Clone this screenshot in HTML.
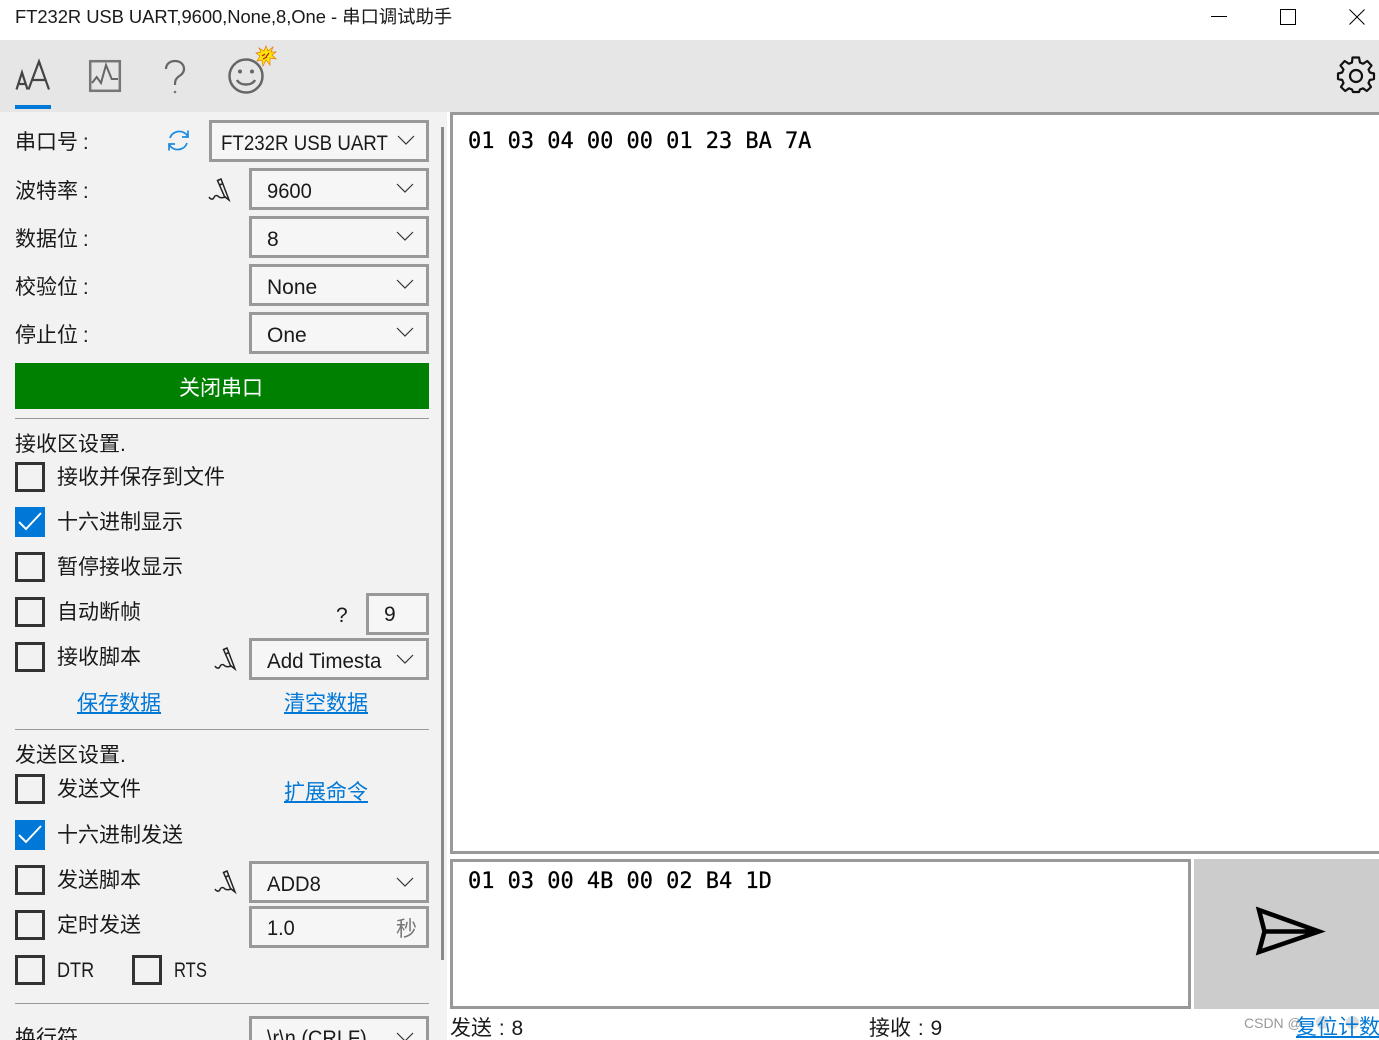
<!DOCTYPE html>
<html lang="zh"><head><meta charset="utf-8"><title>串口调试助手</title>
<style>
html,body{margin:0;padding:0;width:1379px;height:1040px;overflow:hidden;background:#fff}
body{position:relative;font-family:"Liberation Sans","Noto Sans CJK SC",sans-serif;color:#1a1a1a}
.a{position:absolute}
.t{position:absolute;white-space:nowrap;font-size:21px;line-height:28px;height:28px;margin-top:1px}
.l{position:absolute;white-space:nowrap;font-size:21px;line-height:28px;color:#0078d7;text-decoration:underline}
.box{position:absolute;box-sizing:border-box;border:3px solid #999;background:#f6f6f6}
.cb{position:absolute;box-sizing:border-box;width:30px;height:30px;border:3px solid #333;left:15px}
.cb.on{background:#0078d7;border-color:#0078d7}
.hr{position:absolute;left:15px;width:414px;height:1px;background:#999}
.m{position:absolute;white-space:pre;font-family:"DejaVu Sans Mono",monospace;font-size:21.95px;line-height:28px;color:#000;-webkit-text-stroke:.3px #000}
.sx{transform-origin:0 50%}
svg{position:absolute;overflow:visible}
</style></head><body>
<div class="t" style="left:15px;top:2px;font-size:18.4px;letter-spacing:-.05px">FT232R USB UART,9600,None,8,One - 串口调试助手</div>
<svg style="left:1211px;top:16px" width="16" height="2"><path d="M0 .5H16" stroke="#000"/></svg>
<svg style="left:1280px;top:9px" width="16" height="16"><rect x=".5" y=".5" width="15" height="15" fill="none" stroke="#000"/></svg>
<svg style="left:1349px;top:9px" width="16" height="16"><path d="M.5 .5L15.500 15.500M15.500 .5L.5 15.500" stroke="#000" fill="none"/></svg>

<div class="a" style="left:0;top:40px;width:1379px;height:72px;background:#e6e6e6"></div>
<div class="a" style="left:0;top:112px;width:447px;height:928px;background:#f2f2f2"></div>

<svg style="left:15px;top:60px" width="36" height="30" fill="none" stroke="#444" stroke-width="2.200"><path d="M1.500 29.500L7 12.500L12.500 29.500M3.200 24H10.800M13.500 29.500L24 1.500L34 29.500M16.500 20H31"/></svg>
<div class="a" style="left:15px;top:105px;width:36px;height:4px;background:#0078d7"></div>
<svg style="left:89px;top:60px" width="32" height="32" fill="none" stroke="#777" stroke-width="2.500"><rect x="1.200" y="1.200" width="29.600" height="29.600"/><path d="M3 23L7.700 17L12 23L17 5L22.700 19L29 19" stroke="#666" stroke-width="2"/></svg>
<svg style="left:164px;top:60px" width="22" height="34" fill="none" stroke="#666" stroke-width="2.200"><path d="M2 9C2 4 6 1 11 1C16 1 20 4 20 9C20 13 17 15 14 17C12 19 11 20 11 25"/><circle cx="11" cy="32" r="1.300" fill="#777" stroke="none"/></svg>
<svg style="left:228px;top:58px" width="36" height="36" fill="none" stroke="#666" stroke-width="2.500"><circle cx="18" cy="18" r="16.500"/><circle cx="12" cy="13.500" r="2" fill="#666" stroke="none"/><circle cx="24" cy="13.500" r="2" fill="#666" stroke="none"/><path d="M9 22C12 28 24 28 27 22"/></svg>
<svg style="left:256px;top:46px" width="20" height="20"><path d="M10 0L12 5L17 1L15 6L20 6L16 9L20 13L14 12L14 19L10 14L7 20L6 14L1 15L4 10L0 7L5 6L3 2L8 5Z" fill="#ffe600" stroke="#e8750c" stroke-width=".7"/><path d="M6 10L9 8M10 11L13 7M7 13L11 11" stroke="#b02020" stroke-width="1.200"/></svg>
<svg style="left:1337px;top:56px" width="38" height="38" viewBox="0 0 38 38" fill="none" stroke="#111" stroke-width="2.200" stroke-linejoin="round"><path d="M15.500 2.500H22L23 7.500L26 8.800L30.300 6L34.500 10.500L31.500 14.500L32.800 17.500L37 18.500V24L32.800 25L31.500 28L34 32L29.800 36L26 33.300L23 34.500L22 37H16L15 34.500L12 33.300L8.200 36L4 32L6.500 28L5.200 25L1 24V18.500L5.200 17.500L6.500 14.500L3.500 10.500L7.700 6L12 8.800L15 7.500Z" transform="translate(0 -1)"/><circle cx="19" cy="20" r="6"/></svg>

<div class="t" style="left:15px;top:128px;word-spacing:-1px">串口号 :</div>
<svg style="left:167px;top:129px" width="23" height="23" fill="none" stroke="#1a8ae0" stroke-width="1.700"><path d="M3 9C5 3 13 0 19 5L21 7.500M21 1.500V8H15M20 14C18 20 10 23 4 18L2 15.500M2 21.500V15H8"/></svg>
<div class="box" style="left:209px;top:120px;width:220px;height:42px"></div>
<div class="t sx" style="left:221px;top:129px;transform:scaleX(.89)">FT232R USB UART</div>
<svg class="c" style="left:397px;top:135px" width="18" height="10" fill="none" stroke="#333" stroke-width="1.200"><path d="M1 1L9 9L17 1"/></svg>

<div class="t" style="left:15px;top:177px;word-spacing:-1px">波特率 :</div>
<svg class="pen" style="left:209px;top:178px" width="22" height="24" fill="none" stroke="#222" stroke-width="1.500"><path d="M0 19C1.500 21.500 4 22 5 19.500C6 17 8 17 10 19C12 20.500 14 19.500 16.500 19M8.500 2.500L12 1L20 22L15.500 18.500ZM10.500 7L14 5.500"/></svg>
<div class="box" style="left:249px;top:168px;width:180px;height:42px"></div>
<div class="t sx" style="left:267px;top:177px;transform:scaleX(.96)">9600</div>
<svg style="left:396px;top:183px" width="18" height="10" fill="none" stroke="#333" stroke-width="1.200"><path d="M1 1L9 9L17 1"/></svg>

<div class="t" style="left:15px;top:225px;word-spacing:-1px">数据位 :</div>
<div class="box" style="left:249px;top:216px;width:180px;height:42px"></div>
<div class="t" style="left:267px;top:225px">8</div>
<svg style="left:396px;top:231px" width="18" height="10" fill="none" stroke="#333" stroke-width="1.200"><path d="M1 1L9 9L17 1"/></svg>

<div class="t" style="left:15px;top:273px;word-spacing:-1px">校验位 :</div>
<div class="box" style="left:249px;top:264px;width:180px;height:42px"></div>
<div class="t" style="left:267px;top:273px">None</div>
<svg style="left:396px;top:279px" width="18" height="10" fill="none" stroke="#333" stroke-width="1.200"><path d="M1 1L9 9L17 1"/></svg>

<div class="t" style="left:15px;top:321px;word-spacing:-1px">停止位 :</div>
<div class="box" style="left:249px;top:312px;width:180px;height:42px"></div>
<div class="t" style="left:267px;top:321px">One</div>
<svg style="left:396px;top:327px" width="18" height="10" fill="none" stroke="#333" stroke-width="1.200"><path d="M1 1L9 9L17 1"/></svg>

<div class="a" style="left:15px;top:363px;width:414px;height:46px;background:#008000"></div>
<div class="t" style="left:179px;top:374px;color:#fff">关闭串口</div>
<div class="hr" style="top:418px"></div>

<div class="t" style="left:15px;top:430px">接收区设置.</div>
<div class="cb" style="top:462px"></div><div class="t" style="left:57px;top:463px">接收并保存到文件</div>
<div class="cb on" style="top:507px"></div><svg style="left:18px;top:511px" width="25" height="20" fill="none" stroke="#fff" stroke-width="2"><path d="M1 11L8 18L23 2"/></svg><div class="t" style="left:57px;top:508px">十六进制显示</div>
<div class="cb" style="top:552px"></div><div class="t" style="left:57px;top:553px">暂停接收显示</div>
<div class="cb" style="top:597px"></div><div class="t" style="left:57px;top:598px">自动断帧</div>
<div class="t" style="left:336px;top:601px">?</div>
<div class="box" style="left:366px;top:593px;width:63px;height:42px"></div>
<div class="t" style="left:384px;top:600px">9</div>
<div class="cb" style="top:642px"></div><div class="t" style="left:57px;top:643px">接收脚本</div>
<svg style="left:215px;top:647px" width="22" height="24" fill="none" stroke="#222" stroke-width="1.500"><path d="M0 19C1.500 21.500 4 22 5 19.500C6 17 8 17 10 19C12 20.500 14 19.500 16.500 19M8.500 2.500L12 1L20 22L15.500 18.500ZM10.500 7L14 5.500"/></svg>
<div class="box" style="left:249px;top:638px;width:180px;height:42px"></div>
<div class="t sx" style="left:267px;top:647px;width:117px;overflow:hidden;transform:scaleX(.98)">Add Timestamp</div>
<svg style="left:396px;top:654px" width="18" height="10" fill="none" stroke="#333" stroke-width="1.200"><path d="M1 1L9 9L17 1"/></svg>
<div class="l" style="left:77px;top:690px">保存数据</div>
<div class="l" style="left:284px;top:690px">清空数据</div>
<div class="hr" style="top:729px"></div>

<div class="t" style="left:15px;top:741px">发送区设置.</div>
<div class="cb" style="top:774px"></div><div class="t" style="left:57px;top:775px">发送文件</div>
<div class="l" style="left:284px;top:779px">扩展命令</div>
<div class="cb on" style="top:820px"></div><svg style="left:18px;top:824px" width="25" height="20" fill="none" stroke="#fff" stroke-width="2"><path d="M1 11L8 18L23 2"/></svg><div class="t" style="left:57px;top:821px">十六进制发送</div>
<div class="cb" style="top:865px"></div><div class="t" style="left:57px;top:866px">发送脚本</div>
<svg style="left:215px;top:870px" width="22" height="24" fill="none" stroke="#222" stroke-width="1.500"><path d="M0 19C1.500 21.500 4 22 5 19.500C6 17 8 17 10 19C12 20.500 14 19.500 16.500 19M8.500 2.500L12 1L20 22L15.500 18.500ZM10.500 7L14 5.500"/></svg>
<div class="box" style="left:249px;top:861px;width:180px;height:42px"></div>
<div class="t sx" style="left:267px;top:870px;transform:scaleX(.96)">ADD8</div>
<svg style="left:396px;top:877px" width="18" height="10" fill="none" stroke="#333" stroke-width="1.200"><path d="M1 1L9 9L17 1"/></svg>
<div class="cb" style="top:910px"></div><div class="t" style="left:57px;top:911px">定时发送</div>
<div class="box" style="left:249px;top:906px;width:180px;height:42px"></div>
<div class="t sx" style="left:267px;top:914px;transform:scaleX(.95)">1.0</div>
<div class="t" style="left:396px;top:915px;color:#777">秒</div>
<div class="cb" style="top:955px"></div><div class="t sx" style="left:57px;top:956px;transform:scaleX(.86)">DTR</div>
<div class="cb" style="top:955px;left:132px"></div><div class="t sx" style="left:174px;top:956px;transform:scaleX(.79)">RTS</div>
<div class="hr" style="top:1003px"></div>
<div class="t" style="left:15px;top:1024px">换行符</div>
<div class="box" style="left:249px;top:1016px;width:180px;height:42px"></div>
<div class="t sx" style="left:267px;top:1024px;transform:scaleX(.95)">\r\n (CRLF)</div>
<svg style="left:396px;top:1032px" width="18" height="10" fill="none" stroke="#333" stroke-width="1.200"><path d="M1 1L9 9L17 1"/></svg>

<div class="a" style="left:441px;top:127px;width:3px;height:833px;background:#8a8a8a"></div>

<div class="a" style="left:450px;top:112px;width:929px;height:742px;box-sizing:border-box;border:3px solid #999;border-right:0;background:#fff"></div>
<div class="m" style="left:468px;top:128px">01 03 04 00 00 01 23 BA 7A</div>
<div class="a" style="left:450px;top:859px;width:741px;height:150px;box-sizing:border-box;border:3px solid #999;background:#fff"></div>
<div class="m" style="left:468px;top:868px">01 03 00 4B 00 02 B4 1D</div>
<div class="a" style="left:1194px;top:859px;width:185px;height:150px;background:#ccc"></div>
<svg style="left:1256px;top:907px" width="72" height="50" fill="none" stroke="#000" stroke-width="4.500"><path d="M3 3L63 24.500L3 45L8.500 24.500ZM8.500 24.500H60"/></svg>

<div class="t" style="left:450px;top:1014px;word-spacing:1px">发送 : 8</div>
<div class="t" style="left:869px;top:1014px;word-spacing:1px">接收 : 9</div>
<div class="t" style="left:1244px;top:1008px;font-size:14px;color:#999">CSDN @</div>
<div class="a" style="left:1316px;top:1016px;width:13px;height:13px;border-radius:50%;background:#ddd"></div>
<div class="a" style="left:1346px;top:1016px;width:13px;height:13px;border-radius:50%;background:#ddd"></div>
<div class="l" style="left:1296px;top:1014px">复位计数</div>
</body></html>
